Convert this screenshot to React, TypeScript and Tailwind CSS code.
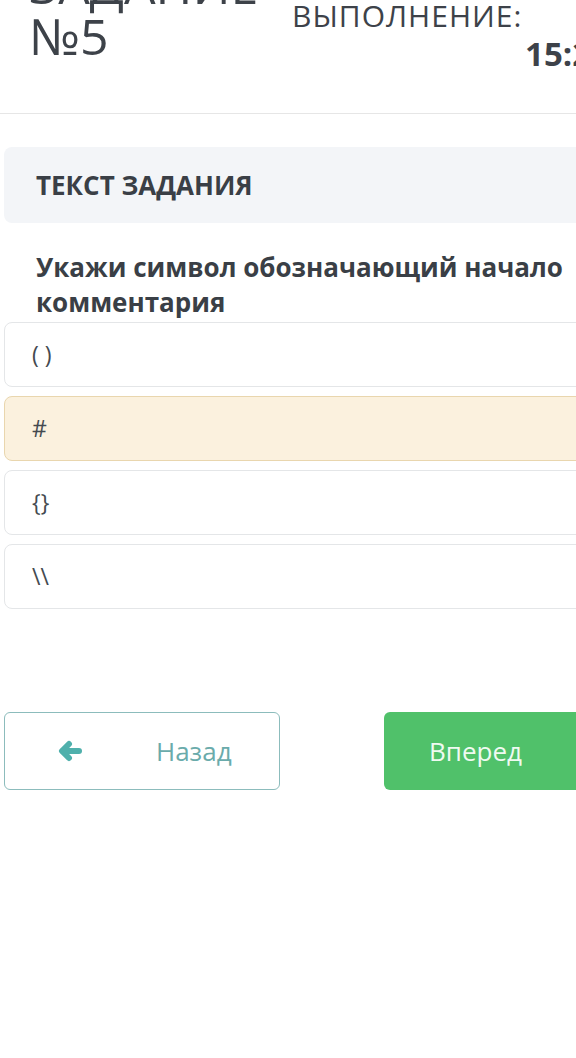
import React from "react";

const options = ["( )", "#", "{}", "\\\\"];

function ArrowLeft() {
  return (
    <svg width="26" height="22" viewBox="0 0 26 22" fill="none">
      <path
        d="M12 4 L5 11 L12 18"
        stroke="#4fb0ac"
        strokeWidth="6"
        strokeLinecap="round"
        strokeLinejoin="round"
      />
      <path d="M6 11 H22" stroke="#4fb0ac" strokeWidth="6" strokeLinecap="round" />
    </svg>
  );
}

export default function App() {
  return (
    <div
      className="w-[576px] h-[1058px] overflow-hidden bg-white"
      style={{ fontFamily: '"Open Sans", "Noto Sans", sans-serif' }}
    >
      <div className="w-[664px] -mt-[40px]">
        {/* Header */}
        <div className="flex border-b border-[#e6e6e6] pb-[39px]">
          <div className="pl-[29px] w-[292px] text-[50px] leading-[51px] font-normal text-[#3d4249]">
            <div>ЗАДАНИЕ</div>
            <div>№5</div>
          </div>
          <div className="w-[318px] flex flex-col font-normal text-[#3d4249]">
            <div className="text-[30px] leading-[36px] tracking-[1px] pt-[2px]">ВРЕМЯ НА</div>
            <div className="text-[30px] leading-[36px] tracking-[1px]">ВЫПОЛНЕНИЕ:</div>
            <div className="text-right text-[33px] leading-[40px] font-bold text-[#3d4249]">15:23</div>
          </div>
        </div>

        <div className="px-[4px] pt-[33px]">
          <div className="bg-[#f3f5f8] rounded-lg h-[76px] flex items-center pl-[32px]">
            <span className="text-[26px] font-bold text-[#3a3f46]">ТЕКСТ ЗАДАНИЯ</span>
          </div>

          <div className="pl-[32px] pt-[27px] text-[26px] leading-[35px] font-bold text-[#3a3f46]">
            Укажи символ обозначающий начало комментария
          </div>

          <div className="flex flex-col gap-[9px] mt-[2px]">
            {options.map((o, i) => (
              <div
                key={i}
                className={
                  "h-[65px] rounded-lg border flex items-center pl-[27px] text-[23px] text-[#444a50] " +
                  (i === 1
                    ? "bg-[#fbf1de] border-[#e9d6ae]"
                    : "bg-white border-[#e4e6e8]")
                }
              >
                {o}
              </div>
            ))}
          </div>

          <div className="flex justify-between mt-[103px]">
            <button className="w-[276px] h-[78px] rounded-md border border-[#8cbcbc] bg-white flex items-center">
              <span className="w-[130px] flex justify-center">
                <ArrowLeft />
              </span>
              <span className="pl-[21px] text-[26px] text-[#6aabab]">Назад</span>
            </button>
            <button className="w-[276px] h-[78px] rounded-md bg-[#50c16a] flex items-center pl-[45px] text-[26px] text-[#effaf1]">
              Вперед
            </button>
          </div>
        </div>
      </div>
    </div>
  );
}
